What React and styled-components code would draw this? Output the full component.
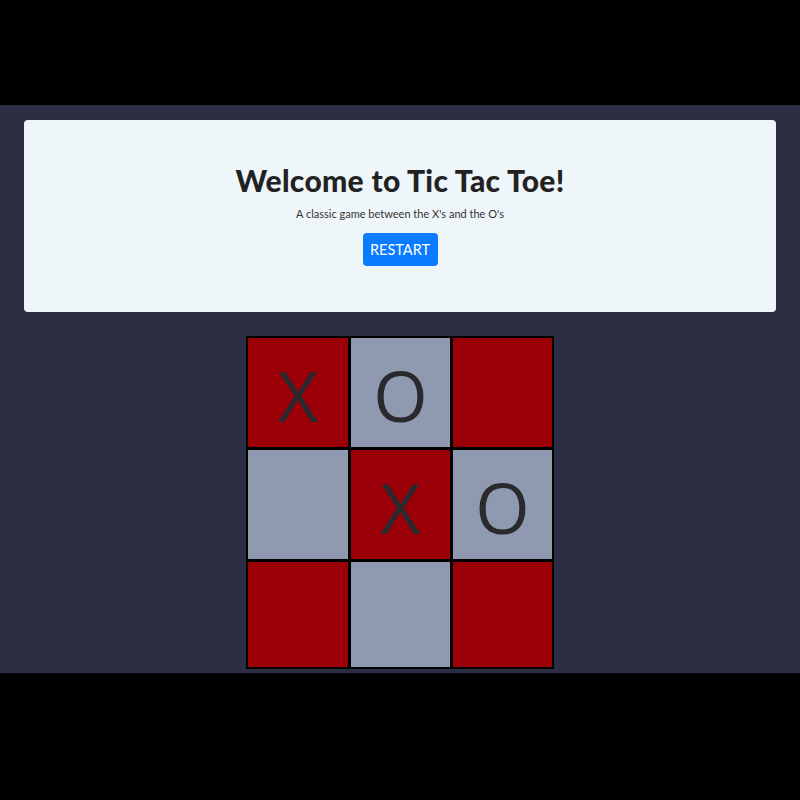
import React from "react";
import styled, { createGlobalStyle } from "styled-components";

const GlobalStyle = createGlobalStyle`
  body {
    margin: 0;
    background: #000;
    font-family: "Lato", "Open Sans", sans-serif;
  }
`;

const board = ["X", "O", "", "", "X", "O", "", "", ""];
const rowHeights = [109, 109, 105];

const App = () => {
  return (
    <Page>
      <GlobalStyle />
      <Main>
        <Header>
          <Title>Welcome to Tic Tac Toe!</Title>
          <Subtitle>A classic game between the X's and the O's</Subtitle>
          <RestartButton>RESTART</RestartButton>
        </Header>
        <Board>
          {board.map((val, i) => (
            <Cell key={i} $dark={i % 2 === 0} $h={rowHeights[Math.floor(i / 3)]}>
              {val}
            </Cell>
          ))}
        </Board>
      </Main>
    </Page>
  );
};

const Page = styled.div`
  height: 800px;
  padding-top: 105px;
  box-sizing: border-box;
`;

const Main = styled.main`
  height: 568px;
  box-sizing: border-box;
  background: #2c2e43;
  padding: 15px 24px 0 24px;
  display: flex;
  flex-direction: column;
  align-items: center;
`;

const Header = styled.section`
  align-self: stretch;
  height: 192px;
  box-sizing: border-box;
  background: #eef6f9;
  border-radius: 4px;
  padding-top: 43px;
  display: flex;
  flex-direction: column;
  align-items: center;
`;

const Title = styled.h1`
  margin: 0;
  font-family: "Lato", sans-serif;
  font-weight: 900;
  font-size: 30px;
  line-height: 34px;
  letter-spacing: 0.3px;
  color: #222;
`;

const Subtitle = styled.p`
  margin: 9px 0 0;
  font-size: 11px;
  line-height: 15px;
  color: #333;
`;

const RestartButton = styled.button`
  margin-top: 12px;
  width: 75px;
  height: 33px;
  border: none;
  border-radius: 4px;
  background: #0a7cff;
  color: #fff;
  font-family: "Lato", sans-serif;
  font-size: 14.5px;
  padding: 0;
`;

const Board = styled.div`
  margin-top: 24px;
  display: grid;
  grid-template-columns: 100px 99px 99px;
  gap: 3px;
  padding: 2px;
  background: #000;
`;

const Cell = styled.div`
  height: ${(p) => p.$h}px;
  background: ${(p) => (p.$dark ? "#9b0009" : "#8f9ab0")};
  display: flex;
  align-items: center;
  justify-content: center;
  font-family: "Open Sans", sans-serif;
  font-size: 70px;
  color: #2a2a2e;
  padding-top: 4px;
  box-sizing: border-box;
`;

export default App;
